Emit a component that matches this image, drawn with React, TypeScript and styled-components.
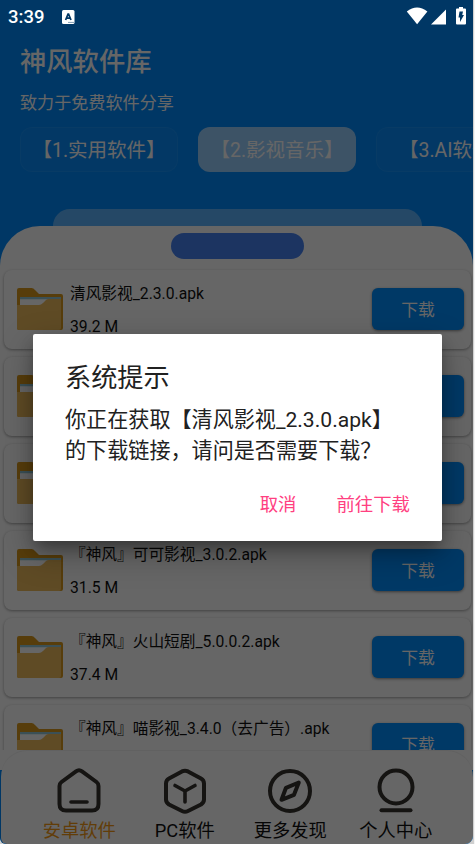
import React from 'react';
import styled, { createGlobalStyle } from 'styled-components';

const GlobalStyle = createGlobalStyle`
  * { box-sizing: border-box; }
  body {
    margin: 0;
    background: #e9e9e9;
    font-family: Roboto, "Noto Sans CJK SC", sans-serif;
  }
`;

const Window = styled.div`
  width: 475px;
  height: 844px;
  overflow: hidden;
  background: linear-gradient(90deg, #d0d0d0 474px, #f4f4f4 474px);
`;

const Phone = styled.div`
  position: relative;
  display: flex;
  flex-direction: column;
  width: 473px;
  height: 844px;
  overflow: hidden;
  background: #008afd;
  border-radius: 0 0 8px 6px;
`;

const StatusBar = styled.div`
  position: absolute;
  z-index: 3;
  top: 0;
  left: 0;
  right: 0;
  height: 33px;
  padding: 0 7px 0 8px;
  display: flex;
  align-items: center;
  color: #fff;
`;

const Clock = styled.span`
  width: 54px;
  font-size: 18.5px;
  font-weight: 500;
  line-height: 34px;
`;

const StatusIcons = styled.div`
  display: flex;
  margin: -1px 0 0 auto;
`;

const Header = styled.header`
  display: flex;
  flex-direction: column;
  height: 226px;
  padding-top: 42px;
  color: #fff;
`;

const AppTitle = styled.h1`
  margin: 0 20px;
  font-size: 26.3px;
  font-weight: 500;
  line-height: 40px;
`;

const Subtitle = styled.p`
  margin: 9px 20px 0;
  font-size: 17.1px;
  line-height: 25px;
`;

const Tabs = styled.nav`
  display: flex;
  gap: 20px;
  margin: 11px 0 37px 20px;
`;

const Tab = styled.button<{ $active?: boolean }>`
  flex: 0 0 158px;
  height: 45px;
  padding: 2px 0 0;
  border: 1px solid rgba(255, 255, 255, ${p => (p.$active ? 0 : 0.05)});
  border-radius: 12px;
  background: ${p => (p.$active ? 'rgba(255,255,255,.6)' : 'rgba(255,255,255,.03)')};
  color: #fff;
  font: 19.5px/41px Roboto, "Noto Sans CJK SC", sans-serif;
  white-space: nowrap;
`;

const BackCard = styled.div`
  width: 369px;
  height: 17px;
  margin-left: 53px;
  border-radius: 20px 20px 0 0;
  background: rgba(255, 255, 255, 0.37);
`;

const Sheet = styled.main`
  display: flex;
  flex-direction: column;
  height: 544px;
  flex: none;
  padding: 7px 2px 0 4px;
  overflow: hidden;
  border-radius: 40px 40px 0 0;
  background: #fff;
`;

const Handle = styled.div`
  flex: none;
  width: 132.5px;
  height: 26px;
  margin-left: 167.2px;
  border-radius: 13px;
  background: #4682f3;
`;

const FileList = styled.div`
  display: flex;
  flex: none;
  flex-direction: column;
  gap: 8px;
  height: 480px;
  margin-top: 11px;
  clip-path: inset(-4px -4px 0 -4px);
`;

const FileRow = styled.article`
  display: flex;
  flex: none;
  align-items: flex-start;
  height: 79px;
  padding: 0 7px 0 13px;
  border-radius: 8px;
  background: #fff;
  box-shadow: 0 1px 3px rgba(0, 0, 0, 0.36);
`;

const FolderSlot = styled.div`
  display: flex;
  height: 42px;
  margin-top: 18px;
`;

const FileInfo = styled.div`
  display: flex;
  flex: 1;
  flex-direction: column;
  gap: 9px;
  padding: 12px 0 0 7px;
  color: #111;
  font-size: 15.7px;
  line-height: 24px;
  white-space: nowrap;
`;

const DownloadButton = styled.button`
  width: 92px;
  height: 42px;
  margin-top: 18px;
  padding: 1px 0 0;
  border: 0;
  border-radius: 6px;
  background: #008efe;
  box-shadow: 0 1px 3px rgba(0, 0, 0, 0.45);
  color: #fff;
  font: 16.8px/42px Roboto, "Noto Sans CJK SC", sans-serif;
`;

const BottomNav = styled.nav`
  position: absolute;
  z-index: 1;
  left: 1px;
  right: 0;
  bottom: 0;
  display: grid;
  grid-template-columns: repeat(4, 105.5px);
  height: 93px;
  padding: 17px 0 0 25.5px;
  border-radius: 26px 26px 8px 6px;
  background: #fff;
  box-shadow: 0 -1px 1px rgba(0, 0, 0, 0.06);
`;

const NavItem = styled.a<{ $active?: boolean }>`
  display: flex;
  flex-direction: column;
  align-items: center;
  color: ${p => (p.$active ? '#f59a16' : '#111')};
  font-size: 18.3px;
  line-height: 26px;
  white-space: nowrap;

  svg { margin-bottom: 4px; }
`;

const Scrim = styled.div`
  position: absolute;
  z-index: 2;
  inset: 0;
  padding: 334px 31px 0 33px;
  background: rgba(0, 0, 0, 0.6);
`;

const Dialog = styled.section`
  display: flex;
  flex-direction: column;
  height: 207px;
  padding: 25px 32px 20px;
  border-radius: 2px;
  background: #fff;
  color: #212121;
  box-shadow: 0 8px 14px -3px rgba(0, 0, 0, 0.32), 0 12px 32px 2px rgba(0, 0, 0, 0.26);
`;

const DialogTitle = styled.h2`
  margin: 0;
  font-size: 26.2px;
  font-weight: 400;
  line-height: 38px;
`;

const Message = styled.p`
  margin: 7px 0 0;
  font-size: 21.1px;
  line-height: 31px;
  white-space: nowrap;
`;

const Actions = styled.div`
  display: flex;
  justify-content: flex-end;
  gap: 40px;
  margin-top: 25px;
`;

const Action = styled.button`
  padding: 0;
  border: 0;
  background: none;
  color: #ff4081;
  font: 18.4px/28px Roboto, "Noto Sans CJK SC", sans-serif;
`;

const FolderIcon = () => (
  <svg width="46" height="42" viewBox="0 0 46 42">
    <path d="M2 0H14.5Q16.5 0 18 2L22 6H44Q46 6 46 8V40Q46 42 44 42H2Q0 42 0 40V2Q0 0 2 0Z" fill="#d99a1c" />
    <path d="M3 9H44V28H3Z" fill="#fff" />
    <path d="M3 9H44V11.2H3Z" fill="#93c9d8" />
    <path d="M0 17H22Q24 17 26 15L29 12Q30 11 32 11H44V40Q44 42 42 42H2Q0 42 0 40Z" fill="#eebb5c" />
  </svg>
);

const iconProps = {
  width: 46,
  height: 46,
  viewBox: '0 0 46 46',
  fill: 'none',
  stroke: '#36322f',
  strokeWidth: 4,
  strokeLinecap: 'round' as const,
  strokeLinejoin: 'round' as const,
};

const HomeIcon = () => (
  <svg {...iconProps}>
    <path d="M20 3.4Q23 1.2 26 3.4L40.5 14Q42.5 15.5 42.5 18V36Q42.5 42.5 36 42.5H10Q3.5 42.5 3.5 36V18Q3.5 15.5 5.5 14Z" />
    <path d="M15 34H31" strokeWidth="3.6" />
  </svg>
);

const CubeIcon = () => (
  <svg {...iconProps}>
    <path d="M20 3.4Q23 2 26 3.4L39 10.4Q42 12 42 15.5V31.5Q42 34.5 39 36.5L26 43Q23 44.5 20 43L7 36.5Q4 34.5 4 31.5V15.5Q4 12 7 10.4Z" />
    <path d="M13 17.5L23 23L33 17.5M23 23V34" strokeWidth="3.6" />
  </svg>
);

const CompassIcon = () => (
  <svg {...iconProps}>
    <circle cx="23" cy="23" r="20" />
    <path d="M31.8 14.5L19 19.8L14.5 31.8L27 26.8Z" />
  </svg>
);

const PersonIcon = () => (
  <svg {...iconProps}>
    <circle cx="23" cy="19" r="16.5" />
    <path d="M8.5 42.2H37.5" />
  </svg>
);

const files = [
  { id: 1, name: '清风影视_2.3.0.apk', size: '39.2 M' },
  { id: 2, name: '', size: '' },
  { id: 3, name: '', size: '' },
  { id: 4, name: '『神风』可可影视_3.0.2.apk', size: '31.5 M' },
  { id: 5, name: '『神风』火山短剧_5.0.0.2.apk', size: '37.4 M' },
  { id: 6, name: '『神风』喵影视_3.4.0（去广告）.apk', size: '' },
];

export default function App() {
  return (
    <Window>
      <GlobalStyle />
      <Phone>
        <StatusBar>
          <Clock>3:39</Clock>
          <svg width="13" height="14" viewBox="0 0 13 14">
            <rect width="12.5" height="14" rx="1.5" fill="#fff" />
            <path d="M3.6 10L6 4.2H6.6L9 10M4.6 8.1H8" fill="none" stroke="#003765" strokeWidth="1.7" />
            <path d="M6.5 12.4H12" stroke="#003765" strokeWidth="1" strokeDasharray="1 1" />
          </svg>
          <StatusIcons>
            <svg width="60" height="20" viewBox="0 0 60 20" fill="#fff">
              <path d="M0.8 5.6Q11 -2.4 21.4 5.6L11.1 18.3Z" />
              <path d="M40 3.5V18.5H25Z" />
              <path d="M53 1H57V2.5H59Q60 2.5 60 3.5V17.5Q60 18.5 59 18.5H51Q50 18.5 50 17.5V3.5Q50 2.5 51 2.5H53Z" />
              <path d="M53.5 5.5H57L56.2 9H58L54 16V11.5H52.5Z" fill="#003765" />
            </svg>
          </StatusIcons>
        </StatusBar>

        <Header>
          <AppTitle>神风软件库</AppTitle>
          <Subtitle>致力于免费软件分享</Subtitle>
          <Tabs>
            <Tab>【1.实用软件】</Tab>
            <Tab $active>【2.影视音乐】</Tab>
            <Tab>【3.AI软件】</Tab>
          </Tabs>
          <BackCard />
        </Header>

        <Sheet>
          <Handle />
          <FileList>
            {files.map(file => (
              <FileRow key={file.id}>
                <FolderSlot><FolderIcon /></FolderSlot>
                <FileInfo>
                  <span>{file.name}</span>
                  <span>{file.size}</span>
                </FileInfo>
                <DownloadButton>下载</DownloadButton>
              </FileRow>
            ))}
          </FileList>
        </Sheet>

        <BottomNav>
          <NavItem $active><HomeIcon />安卓软件</NavItem>
          <NavItem><CubeIcon />PC软件</NavItem>
          <NavItem><CompassIcon />更多发现</NavItem>
          <NavItem><PersonIcon />个人中心</NavItem>
        </BottomNav>

        <Scrim>
          <Dialog role="dialog">
            <DialogTitle>系统提示</DialogTitle>
            <Message>
              你正在获取【清风影视_2.3.0.apk】
              <br />
              的下载链接，请问是否需要下载？
            </Message>
            <Actions>
              <Action>取消</Action>
              <Action>前往下载</Action>
            </Actions>
          </Dialog>
        </Scrim>
      </Phone>
    </Window>
  );
}
